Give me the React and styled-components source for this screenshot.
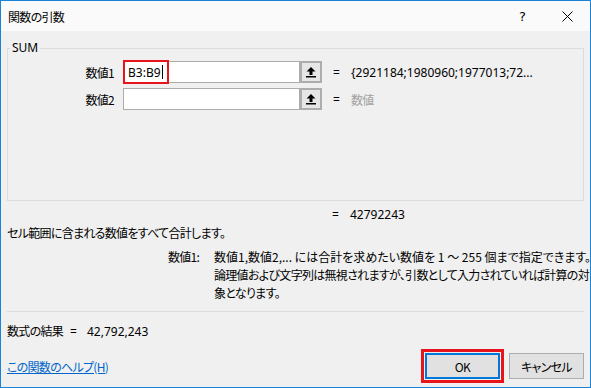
import styled, { createGlobalStyle } from "styled-components"

const GlobalStyle = createGlobalStyle`
  html, body {
    margin: 0;
    padding: 0;
    background: #f0f0f0;
  }
  body {
    font-family: "Noto Sans CJK JP", "Noto Sans", sans-serif;
    font-size: 12px;
    letter-spacing: -0.7px;
    color: #000;
    font-feature-settings: "palt";
  }
`

const Window = styled.div`
  width: 591px;
  height: 388px;
  box-sizing: border-box;
  border: 1px solid #1883d7;
  background: #f0f0f0;
  display: flex;
  flex-direction: column;
`

const TitleBar = styled.div`
  height: 30px;
  flex: none;
  background: #fafafa;
  display: flex;
  align-items: center;
  padding-left: 7px;
`

const Title = styled.div`
  flex: 1;
  font-size: 12px;
`

const TitleButton = styled.div`
  width: 45px;
  height: 30px;
  display: flex;
  align-items: center;
  justify-content: center;
  font-family: "DejaVu Sans", sans-serif;
  font-size: 13px;
  letter-spacing: 0;
`

const Body = styled.div`
  flex: 1;
  display: flex;
  flex-direction: column;
  padding: 0 6px 4px;
`

const Group = styled.fieldset`
  margin: 10px 0 0;
  padding: 6px 0 85px;
  border: 1px solid #dcdcdc;
  min-width: 0;
`

const Legend = styled.legend`
  margin-left: 2px;
  padding: 0 2px;
  line-height: 14px;
  font-family: "Noto Sans", sans-serif;
  font-size: 12px;
  letter-spacing: 0;
`

const ArgRow = styled.div`
  display: flex;
  align-items: center;
  height: 22px;
  margin-bottom: 5px;
`

const ArgLabel = styled.div`
  width: 106px;
  margin-right: 9px;
  text-align: right;
`

const InputBox = styled.div`
  position: relative;
  width: 177px;
  height: 22px;
  box-sizing: border-box;
  border: 1px solid #acacac;
  background: #fff;
  display: flex;
  align-items: center;
  padding-left: 4px;
  font-family: "Noto Sans", sans-serif;
  letter-spacing: 0;
`

const Caret = styled.span`
  display: inline-block;
  width: 1px;
  height: 14px;
  margin-left: 1px;
  background: #000;
`

const Highlight = styled.div`
  position: absolute;
  left: -1px;
  top: -2px;
  width: 46px;
  height: 24px;
  box-sizing: border-box;
  border: 2px solid #e8141b;
`

const RefButton = styled.div`
  width: 22px;
  height: 22px;
  box-sizing: border-box;
  border: 2px solid #adadad;
  background: #e6e6e6;
  display: flex;
  align-items: center;
  justify-content: center;
`

const Equals = styled.span`
  margin-left: ${(p) => (p.$flush ? "0" : "11px")};
  width: 8px;
  font-family: "Noto Sans", sans-serif;
  letter-spacing: 0;
`

const ArgValue = styled.span`
  margin-left: 10px;
  font-family: ${(p) => (p.$muted ? `"Noto Sans CJK JP"` : `"Noto Sans"`)}, sans-serif;
  letter-spacing: ${(p) => (p.$muted ? "-0.7px" : "0")};
  color: ${(p) => (p.$muted ? "#a0a0a0" : "#000")};
`

const ResultRow = styled.div`
  margin-top: 5px;
  padding-left: 325px;
  display: flex;
`

const Summary = styled.div`
  margin-top: 1px;
`

const HelpGrid = styled.div`
  margin-top: 7px;
  padding-left: 161px;
  display: grid;
  grid-template-columns: 46px 1fr;
  line-height: 18px;
  white-space: nowrap;
`

const HelpLine = styled.div`
  letter-spacing: ${(p) => (p.$loose ? "0" : "-0.7px")};
`

const Separator = styled.div`
  margin-top: 9px;
  height: 1px;
  background: #dcdcdc;
`

const FormulaResult = styled.div`
  margin-top: 10px;
  display: flex;
  align-items: baseline;
`

const FormulaEquals = styled.span`
  margin-left: 7px;
  font-family: "Noto Sans", sans-serif;
  letter-spacing: 0;
`

const Number = styled.span`
  margin-left: 10px;
  font-family: "Noto Sans", sans-serif;
  letter-spacing: 0;
`

const Footer = styled.div`
  margin-top: auto;
  display: flex;
  align-items: center;
`

const HelpLink = styled.a`
  flex: 1;
  color: #0066cc;
  text-decoration: underline;
`

const Mark = styled.div`
  border: 3px solid #e8141b;
  padding: 1px;
`

const DialogButton = styled.div`
  width: 75px;
  height: 26px;
  box-sizing: border-box;
  background: #e1e1e1;
  border: ${(p) => (p.$primary ? "2px solid #0078d7" : "1px solid #adadad")};
  display: flex;
  align-items: center;
  justify-content: center;
  margin-left: ${(p) => (p.$primary ? "0" : "5px")};
`

function RefIcon() {
  return (
    <svg width="12" height="12" viewBox="0 0 12 12">
      <path d="M6 1 L10.5 5.5 L7.5 5.5 L7.5 9 L4.5 9 L4.5 5.5 L1.5 5.5 Z" fill="#000" />
      <rect x="1" y="10" width="10" height="1.5" fill="#000" />
    </svg>
  )
}

function CloseIcon() {
  return (
    <svg width="11" height="11" viewBox="0 0 11 11">
      <path d="M0.5 0.5 L10.5 10.5 M10.5 0.5 L0.5 10.5" stroke="#000" strokeWidth="1" />
    </svg>
  )
}

export default function App() {
  return (
    <Window>
      <GlobalStyle />
      <TitleBar>
        <Title>関数の引数</Title>
        <TitleButton>?</TitleButton>
        <TitleButton>
          <CloseIcon />
        </TitleButton>
      </TitleBar>
      <Body>
        <Group>
          <Legend>SUM</Legend>
          <ArgRow>
            <ArgLabel>数値1</ArgLabel>
            <InputBox>
              B3:B9
              <Caret />
              <Highlight />
            </InputBox>
            <RefButton>
              <RefIcon />
            </RefButton>
            <Equals>=</Equals>
            <ArgValue>{"{2921184;1980960;1977013;72..."}</ArgValue>
          </ArgRow>
          <ArgRow>
            <ArgLabel>数値2</ArgLabel>
            <InputBox />
            <RefButton>
              <RefIcon />
            </RefButton>
            <Equals>=</Equals>
            <ArgValue $muted>数値</ArgValue>
          </ArgRow>
        </Group>
        <ResultRow>
          <Equals $flush>=</Equals>
          <ArgValue>42792243</ArgValue>
        </ResultRow>
        <Summary>セル範囲に含まれる数値をすべて合計します。</Summary>
        <HelpGrid>
          <span>数値1:</span>
          <div>
            <HelpLine $loose>数値1,数値2,... には合計を求めたい数値を 1 ～ 255 個まで指定できます。</HelpLine>
            <HelpLine>論理値および文字列は無視されますが、引数として入力されていれば計算の対</HelpLine>
            <HelpLine>象となります。</HelpLine>
          </div>
        </HelpGrid>
        <Separator />
        <FormulaResult>
          数式の結果
          <FormulaEquals>=</FormulaEquals>
          <Number>42,792,243</Number>
        </FormulaResult>
        <Footer>
          <HelpLink href="#">この関数のヘルプ(H)</HelpLink>
          <Mark>
            <DialogButton $primary>OK</DialogButton>
          </Mark>
          <DialogButton>キャンセル</DialogButton>
        </Footer>
      </Body>
    </Window>
  )
}
